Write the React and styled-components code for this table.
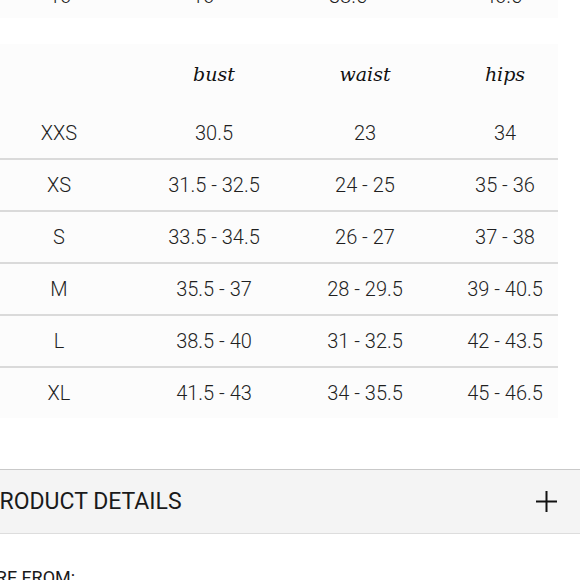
import React from "react";
import styled, { createGlobalStyle } from "styled-components";

const GlobalStyle = createGlobalStyle`
  html, body {
    margin: 0;
    padding: 0;
    background: #ffffff;
    overflow: hidden;
  }
  body {
    font-family: "Roboto", "Liberation Sans", Arial, sans-serif;
    color: #222222;
  }
`;

const Page = styled.div`
  width: 580px;
  height: 580px;
  overflow: hidden;
`;

const Table = styled.div`
  width: 558px;
  background: #fcfcfc;
  margin-top: ${(p) => p.$top || 0}px;
`;

const Row = styled.div`
  display: grid;
  grid-template-columns: ${(p) => p.$cols};
  align-items: center;
  height: ${(p) => p.$height || 52}px;
  padding-bottom: ${(p) => p.$lift || 0}px;
  box-sizing: border-box;
  border-bottom: ${(p) => (p.$divider ? "2px solid #dadada" : "none")};
`;

const Cell = styled.div`
  text-align: center;
  font-size: 20px;
  font-weight: 300;
  color: #1f1f1f;
  white-space: nowrap;
`;

const HeadCell = styled.div`
  text-align: center;
  font-family: "DejaVu Serif", "Liberation Serif", serif;
  font-style: italic;
  font-size: 19px;
  color: #111111;
`;

const Accordion = styled.div`
  margin-top: 51px;
  width: 580px;
  height: 65px;
  box-sizing: border-box;
  background: #f4f4f4;
  border-top: 1px solid #c9c9c9;
  border-bottom: 1px solid #dddddd;
  display: flex;
  align-items: center;
  justify-content: space-between;
  padding-right: 23px;
`;

const AccordionTitle = styled.span`
  margin-left: -15px;
  font-size: 23px;
  font-weight: 400;
  color: #1a1a1a;
`;

const ShopLabel = styled.div`
  margin-top: 33px;
  margin-left: -84px;
  font-size: 18px;
  line-height: 22px;
  color: #1a1a1a;
  white-space: nowrap;
`;

const Plus = () => (
  <svg width="21" height="21" viewBox="0 0 21 21">
    <path d="M10.5 0 V21 M0 10.5 H21" stroke="#111" strokeWidth="2" fill="none" />
  </svg>
);

const SIZE_COLS = "118px 192px 110px 170px";
const PREV_COLS = "120px 166px 124px 186px";

const sizes = [
  ["XXS", "30.5", "23", "34"],
  ["XS", "31.5 - 32.5", "24 - 25", "35 - 36"],
  ["S", "33.5 - 34.5", "26 - 27", "37 - 38"],
  ["M", "35.5 - 37", "28 - 29.5", "39 - 40.5"],
  ["L", "38.5 - 40", "31 - 32.5", "42 - 43.5"],
  ["XL", "41.5 - 43", "34 - 35.5", "45 - 46.5"],
];

export default function App() {
  return (
    <Page>
      <GlobalStyle />
      <Table $top={-26}>
        <Row $cols={PREV_COLS} $height={44}>
          <Cell>16</Cell>
          <Cell>16</Cell>
          <Cell>38.5</Cell>
          <Cell>46.5</Cell>
        </Row>
      </Table>

      <Table $top={26}>
        <Row $cols={SIZE_COLS} $height={64} $lift={4}>
          <HeadCell />
          <HeadCell>bust</HeadCell>
          <HeadCell>waist</HeadCell>
          <HeadCell>hips</HeadCell>
        </Row>
        {sizes.map((r, i) => {
          const last = i === sizes.length - 1;
          return (
            <Row key={r[0]} $cols={SIZE_COLS} $height={last ? 50 : 52} $divider={!last}>
              {r.map((v, j) => (
                <Cell key={j}>{v}</Cell>
              ))}
            </Row>
          );
        })}
      </Table>

      <Accordion>
        <AccordionTitle>PRODUCT DETAILS</AccordionTitle>
        <Plus />
      </Accordion>

      <ShopLabel>SHOP MORE FROM:</ShopLabel>
    </Page>
  );
}
